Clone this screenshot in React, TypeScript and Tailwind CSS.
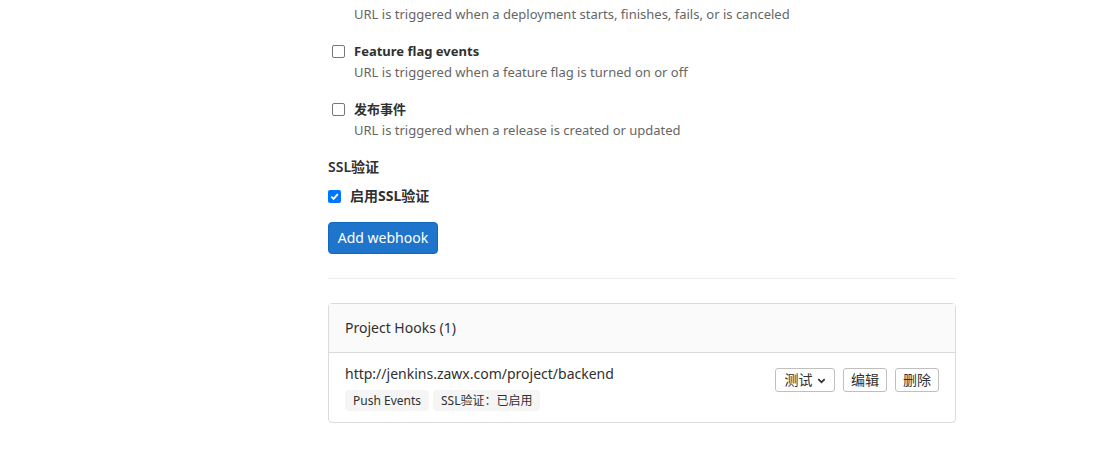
import React from "react";

const font = { fontFamily: '"Noto Sans", "Noto Sans CJK SC", sans-serif' };

function Item({ label, desc }: { label: string; desc: string }) {
  return (
    <div className="mt-[17px]">
      <label className="flex h-[21px] items-center">
        <span className="ml-1 h-[13px] w-[13px] rounded-[2px] border border-[#767676] bg-white" />
        <span className="ml-[9px] text-[13px] font-bold text-[#303030]">{label}</span>
      </label>
      <div className="ml-[26px] h-5 text-[13px] leading-5 text-[#666]">{desc}</div>
    </div>
  );
}

export default function App() {
  return (
    <div className="min-h-[452px] w-[1101px] bg-white" style={font}>
      <div className="ml-[328px] w-[628px] pt-1">
        <div className="ml-[26px] h-5 text-[13px] leading-5 text-[#666]">
          URL is triggered when a deployment starts, finishes, fails, or is canceled
        </div>
        <Item label="Feature flag events" desc="URL is triggered when a feature flag is turned on or off" />
        <Item label="发布事件" desc="URL is triggered when a release is created or updated" />
        <div className="mt-[17px] h-5 text-sm font-semibold leading-5 text-[#303030]">SSL验证</div>
        <label className="mt-[9px] flex h-5 items-center">
          <span className="flex h-[13px] w-[13px] items-center justify-center rounded-[2px] bg-[#0075ff]">
            <svg width="11" height="11" viewBox="0 0 12 12">
              <path d="M2.5 6.2 L5 8.6 L9.6 3.4" stroke="white" strokeWidth="2" fill="none" />
            </svg>
          </span>
          <span className="ml-[9px] text-sm font-bold text-[#303030]">启用SSL验证</span>
        </label>
        <button className="mt-4 h-8 w-[110px] rounded-[4px] border border-[#1068bf] bg-[#1f75cb] text-sm text-white">
          Add webhook
        </button>
        <div className="mt-6 border-t border-[#ececec]" />
        <div className="mt-6 rounded-[4px] border border-[#dbdbdb]">
          <div className="flex h-[49px] items-center border-b border-[#dbdbdb] bg-[#fafafa] px-4 text-sm text-[#303030]">
            Project Hooks (1)
          </div>
          <div className="flex items-start justify-between px-4 pb-[11px] pt-[11px]">
            <div>
              <div className="h-5 text-sm leading-5 text-[#303030]">http://jenkins.zawx.com/project/backend</div>
              <div className="mt-[6px] flex gap-1">
                <span className="flex h-[21px] items-center rounded-[4px] bg-[#f5f5f5] px-2 text-xs text-[#303030]">Push Events</span>
                <span className="flex h-[21px] items-center rounded-[4px] bg-[#f5f5f5] px-2 text-xs text-[#303030]">SSL验证：已启用</span>
              </div>
            </div>
            <div className="mt-[4px] mr-0 flex gap-2">
              <button className="flex h-6 w-[60px] items-center justify-center gap-1 rounded-[3px] border border-[#bfbfbf] bg-white text-sm text-[#303030]">
                测试
                <svg width="9" height="9" viewBox="0 0 10 10">
                  <path d="M1.5 3.5 L5 7 L8.5 3.5" stroke="#303030" strokeWidth="2" fill="none" />
                </svg>
              </button>
              <button className="h-6 w-11 rounded-[3px] border border-[#bfbfbf] bg-white text-sm text-[#303030]">编辑</button>
              <button className="h-6 w-11 rounded-[3px] border border-[#bfbfbf] bg-white text-sm text-[#303030]">删除</button>
            </div>
          </div>
        </div>
      </div>
    </div>
  );
}
